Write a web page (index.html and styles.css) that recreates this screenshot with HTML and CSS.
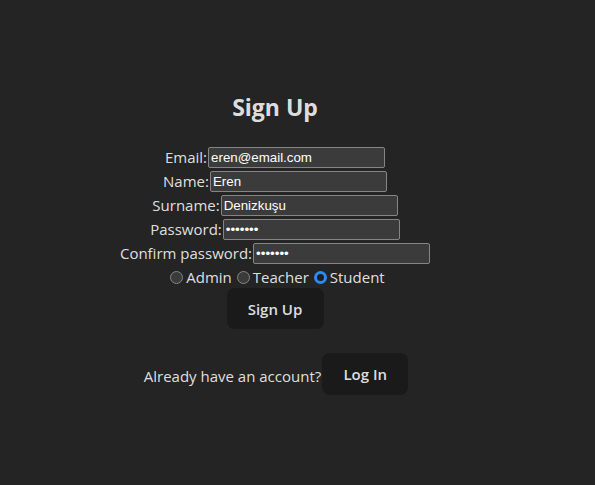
FILE: index.html
```html
<!DOCTYPE html>
<html lang="en">
<head>
<meta charset="utf-8">
<title>Sign Up</title>
<link rel="stylesheet" href="styles.css">
</head>
<body>
<div class="root">
  <h2 class="title">Sign Up</h2>
  <form class="form">
    <div class="row"><label class="label">Email:</label><input class="field" type="text" value="eren@email.com"></div>
    <div class="row"><label class="label">Name:</label><input class="field" type="text" value="Eren"></div>
    <div class="row"><label class="label">Surname:</label><input class="field" type="text" value="Denizkuşu"></div>
    <div class="row"><label class="label">Password:</label><input class="field" type="password" value="1234567"></div>
    <div class="row"><label class="label">Confirm password:</label><input class="field" type="password" value="1234567"></div>
    <div class="row radios">
      <input class="radio" type="radio" name="role" id="r1"><label for="r1" class="label">Admin</label>
      <input class="radio" type="radio" name="role" id="r2"><label for="r2" class="label">Teacher</label>
      <input class="radio" type="radio" name="role" id="r3" checked><label for="r3" class="label">Student</label>
    </div>
    <div class="row btnrow"><button type="button" class="btn">Sign Up</button></div>
  </form>
  <div class="login">
    <span class="label">Already have an account?</span>
    <button type="button" class="btn">Log In</button>
  </div>
</div>
</body>
</html>
```

FILE: styles.css
```css
html, body {
  margin: 0;
  padding: 0;
}
body {
  background: #242424;
  color: rgba(255, 255, 255, 0.87);
  font-family: "Open Sans", "Noto Sans", sans-serif;
  font-size: 15px;
  line-height: 24px;
  min-height: 485px;
}
.root {
  width: 486px;
  padding: 69px 32px 0 32px;
  display: flex;
  flex-direction: column;
  align-items: center;
}
.title {
  margin: 20px 0 20px 0;
  font-size: 23px;
  line-height: 36px;
  font-weight: 700;
}
.form {
  display: flex;
  flex-direction: column;
  align-items: center;
}
.row {
  display: flex;
  align-items: center;
  justify-content: center;
  height: 24px;
}
.label {
  white-space: nowrap;
}
.field {
  box-sizing: border-box;
  width: 177px;
  height: 21px;
  margin: 0 0 0 1px;
  padding: 1px 2px;
  background: #3b3b3b;
  border: 1px solid #858585;
  border-radius: 2px;
  color: #ffffff;
  font-family: "Liberation Sans", Arial, sans-serif;
  font-size: 13.33px;
  outline: none;
}
.radio {
  appearance: none;
  -webkit-appearance: none;
  box-sizing: border-box;
  width: 13px;
  height: 13px;
  margin: 1px 3px 0 5px;
  border-radius: 50%;
  border: 1px solid #858585;
  background: #3b3b3b;
}
.radio:checked {
  border: 3px solid #2a8cf0;
  background: #1e1e1e;
}
.btnrow {
  height: auto;
  margin-top: -1px;
}
.btn {
  box-sizing: border-box;
  font-family: inherit;
  font-size: 15px;
  font-weight: 600;
  line-height: 20px;
  padding: 9.6px 19.2px;
  border: 1px solid transparent;
  border-radius: 8px;
  background: #1a1a1a;
  color: rgba(255, 255, 255, 0.87);
}
.btnrow .btn {
  height: 41px;
  width: 97px;
}
.login {
  display: flex;
  align-items: center;
  margin-top: 24px;
  padding-left: 2px;
}
.login .label {
  margin-right: 1px;
  margin-top: 4px;
}
.login .btn {
  height: 42px;
  width: 86px;
}
```
